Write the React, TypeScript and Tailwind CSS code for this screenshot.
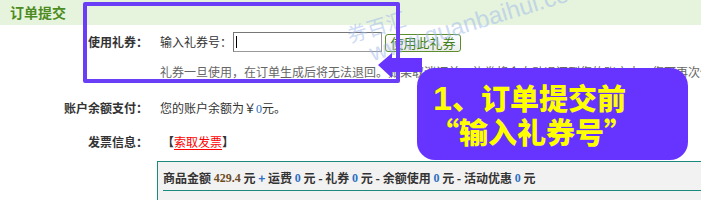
import React from 'react';

const cjk = { fontFamily: '"Noto Sans CJK SC", "Liberation Sans", sans-serif' };
const serif = { fontFamily: '"Liberation Serif", "Noto Sans CJK SC", serif' };

function FormRow({ label, children, className }: { label: string; children: React.ReactNode; className?: string }) {
    return (
        <div className={`flex items-center ${className ?? ''}`}>
            <div className="w-[148px] text-right text-[12px] font-bold text-[#333]">{label}</div>
            <div className="ml-[12px] flex items-center text-[12px] text-[#333]">{children}</div>
        </div>
    );
}

export default function App() {
    return (
        <div className="relative w-[701px] h-[200px] overflow-hidden bg-white" style={cjk}>
            {/* header */}
            <div className="h-[25px] bg-[#e6f4dd] flex items-center pl-[10px]">
                <span className="text-[14px] font-bold text-[#4c8b22]">订单提交</span>
            </div>

            {/* coupon row */}
            <FormRow label="使用礼券：" className="mt-[7px] h-[20px]">
                <span>输入礼券号：</span>
                <div className="relative ml-px w-[149px] h-[20px] border border-[#999] border-t-[#777] border-l-[#777] bg-white">
                    <div className="absolute left-[2px] top-[3px] w-px h-[12px] bg-black" />
                </div>
                <button className="ml-[3px] mt-[2px] w-[76px] h-[18px] rounded-[3px] border border-[#5e8d2f] bg-gradient-to-b from-white to-[#ececec] text-[13px] leading-[16px] text-[#3f7d1a]">
                    使用此礼券
                </button>
            </FormRow>

            <div className="mt-[12px] ml-[160px] h-[16px] leading-[16px] text-[12px] text-[#666] whitespace-nowrap">
                礼券一旦使用，在订单生成后将无法退回。如果取消订单，礼券将会自动退还到您的账户中，您可再次使用。
            </div>

            <FormRow label="账户余额支付：" className="mt-[18px] h-[20px]">
                <span>您的账户余额为￥<span className="text-[#2d6fc2]" style={serif}>0</span>元。</span>
            </FormRow>

            <FormRow label="发票信息：" className="mt-[14px] h-[20px]">
                <span className="ml-[2px] font-bold">【</span>
                <span className="text-[#f00] underline underline-offset-2">索取发票</span>
                <span className="font-bold">】</span>
            </FormRow>

            {/* totals box */}
            <div className="mt-[9px] ml-[157px] w-[580px] h-[60px] border border-[#1b8a7c] bg-[#f3f2f2]">
                <div className="ml-[5px] h-[29px] border-b border-[#1b8a7c] flex items-center text-[12px] font-bold text-[#333] whitespace-nowrap pt-[4px]">
                    商品金额&nbsp;<span className="text-[#6b4a24]" style={serif}>429.4</span>&nbsp;元&nbsp;<span className="text-[#2d6fc2]">+</span>&nbsp;运费&nbsp;<span className="text-[#2d6fc2]" style={serif}>0</span>&nbsp;元 - 礼券&nbsp;<span className="text-[#2d6fc2]" style={serif}>0</span>&nbsp;元 - 余额使用&nbsp;<span className="text-[#2d6fc2]" style={serif}>0</span>&nbsp;元 - 活动优惠&nbsp;<span className="text-[#2d6fc2]" style={serif}>0</span>&nbsp;元
                </div>
            </div>

            {/* watermark */}
            <div className="absolute left-[334px] top-[4px] -rotate-[17deg] origin-top-left text-[#9db8ea] opacity-50 leading-[24px] pointer-events-none">
                <div className="text-[20px] ml-[4px] mt-[22px]">券百汇</div>
                <div className="text-[24px] ml-[20px]" style={{ fontFamily: '"Liberation Sans", sans-serif' }}>www.quanbaihui.com</div>
            </div>

            {/* highlight frame */}
            <div className="absolute left-[83px] top-[2px] w-[317px] h-[81px] border-[4px] border-[#6a3ef6] rounded-[2px]" />

            {/* arrow */}
            <svg className="absolute left-[376px] top-[51px]" width="48" height="30" viewBox="0 0 48 30">
                <polygon points="2,14 16,2 16,7 46,7 46,21 16,21 16,27" fill="#6633ff" />
            </svg>

            {/* callout */}
            <div className="absolute left-[417px] top-[68px] w-[271px] h-[92px] rounded-[18px] bg-[#6633ff] text-[#ffff00] font-black">
                <div className="ml-[16px] mt-[13px] text-[29px] leading-[33px] whitespace-nowrap">
                    <span className="text-[34px]" style={{ fontFamily: '"Liberation Sans", sans-serif' }}>1</span>、订单提交前
                </div>
                <div className="ml-[13px] text-[29px] leading-[33px] whitespace-nowrap">“输入礼券号”</div>
            </div>
        </div>
    );
}
